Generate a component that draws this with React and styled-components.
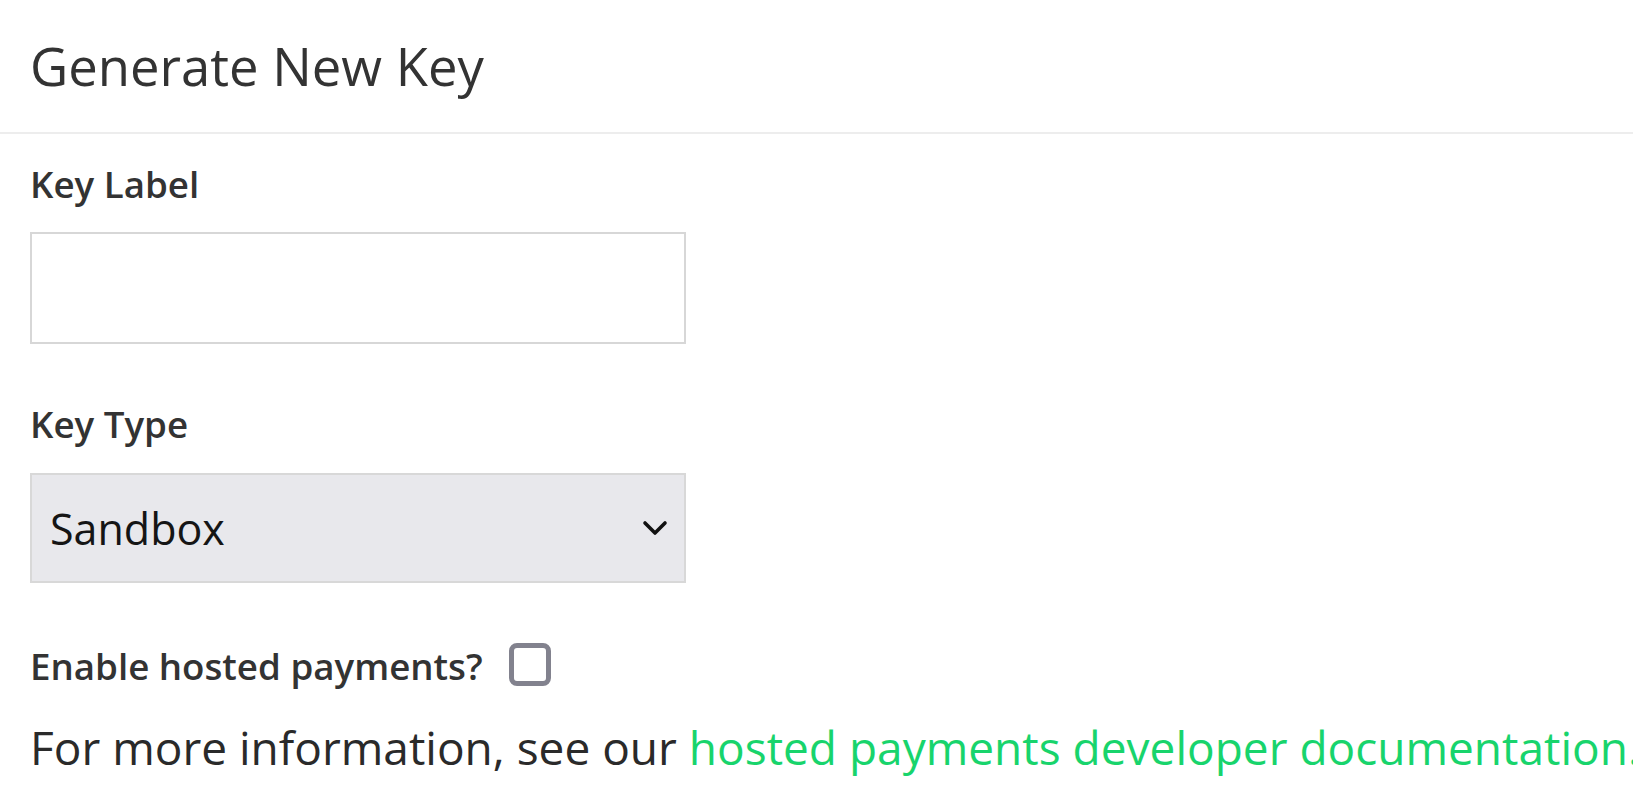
import React from "react";
import styled, { createGlobalStyle } from "styled-components";

const GlobalStyle = createGlobalStyle`
  html, body {
    margin: 0;
    padding: 0;
    background: #ffffff;
    overflow: hidden;
  }
  body {
    font-family: "Open Sans", "Noto Sans", sans-serif;
    color: #333333;
  }
`;

const Page = styled.div`
  width: 100%;
`;

const Header = styled.header`
  padding: 30px 30px 31px;
  border-bottom: 2px solid #ededed;
`;

const Title = styled.h1`
  margin: 0;
  font-size: 52.6px;
  font-weight: 400;
  line-height: 71px;
  color: #333333;
`;

const Body = styled.form`
  padding: 26px 30px 0;
`;

const Field = styled.div`
  margin-bottom: ${(p) => p.gap || 0}px;
`;

const Label = styled.label`
  display: block;
  font-size: 36.7px;
  font-weight: 600;
  line-height: 49px;
  color: #333333;
  margin-bottom: ${(p) => p.gap || 0}px;
`;

const TextInput = styled.input`
  display: block;
  box-sizing: border-box;
  width: 656px;
  height: 112px;
  border: 2px solid #d7d7d7;
  background: #ffffff;
  outline: none;
  padding: 0 18px;
  font-family: inherit;
  font-size: 43px;
`;

const SelectWrap = styled.div`
  position: relative;
  width: 656px;
  height: 110px;
`;

const Select = styled.select`
  appearance: none;
  box-sizing: border-box;
  width: 100%;
  height: 100%;
  border: 2px solid #d8d8d8;
  border-radius: 0;
  background: #e8e8ec;
  padding: 0 18px;
  font-family: "Open Sans", "Noto Sans", sans-serif;
  font-size: 43px;
  color: #151515;
  outline: none;
`;

const Chevron = styled.svg`
  position: absolute;
  right: 18px;
  top: 50%;
  transform: translateY(-50%);
  pointer-events: none;
`;

const CheckRow = styled.div`
  display: flex;
  align-items: center;
  gap: 26px;
`;

const CheckLabel = styled.span`
  font-size: 36.7px;
  font-weight: 600;
  line-height: 49px;
  color: #333333;
`;

const CheckBox = styled.span`
  box-sizing: border-box;
  width: 42px;
  height: 43px;
  border: 5px solid #82828e;
  border-radius: 8px;
  background: #ffffff;
  margin-top: -4px;
`;

const Info = styled.p`
  margin: 25px 0 0;
  font-size: 46px;
  font-weight: 400;
  line-height: normal;
  color: #2a2a2a;
  white-space: nowrap;
`;

const Link = styled.a`
  color: #18d46c;
  text-decoration: none;
`;

const App = () => {
  return (
    <Page>
      <GlobalStyle />
      <Header>
        <Title>Generate New Key</Title>
      </Header>
      <Body onSubmit={(e) => e.preventDefault()}>
        <Field gap={56}>
          <Label htmlFor="key-label" gap={23}>
            Key Label
          </Label>
          <TextInput id="key-label" type="text" name="label" />
        </Field>

        <Field gap={59}>
          <Label htmlFor="key-type" gap={24}>
            Key Type
          </Label>
          <SelectWrap>
            <Select id="key-type" name="type" defaultValue="sandbox">
              <option value="sandbox">Sandbox</option>
              <option value="production">Production</option>
            </Select>
            <Chevron width="26" height="16" viewBox="0 0 26 16">
              <path
                d="M3 3 L13 13 L23 3"
                fill="none"
                stroke="#111111"
                strokeWidth="3.6"
                strokeLinecap="round"
                strokeLinejoin="round"
              />
            </Chevron>
          </SelectWrap>
        </Field>

        <CheckRow>
          <CheckLabel>Enable hosted payments?</CheckLabel>
          <CheckBox role="checkbox" aria-checked="false" />
        </CheckRow>

        <Info>
          For more information, see our{" "}
          <Link href="#">hosted payments developer documentation.</Link>
        </Info>
      </Body>
    </Page>
  );
};

export default App;
